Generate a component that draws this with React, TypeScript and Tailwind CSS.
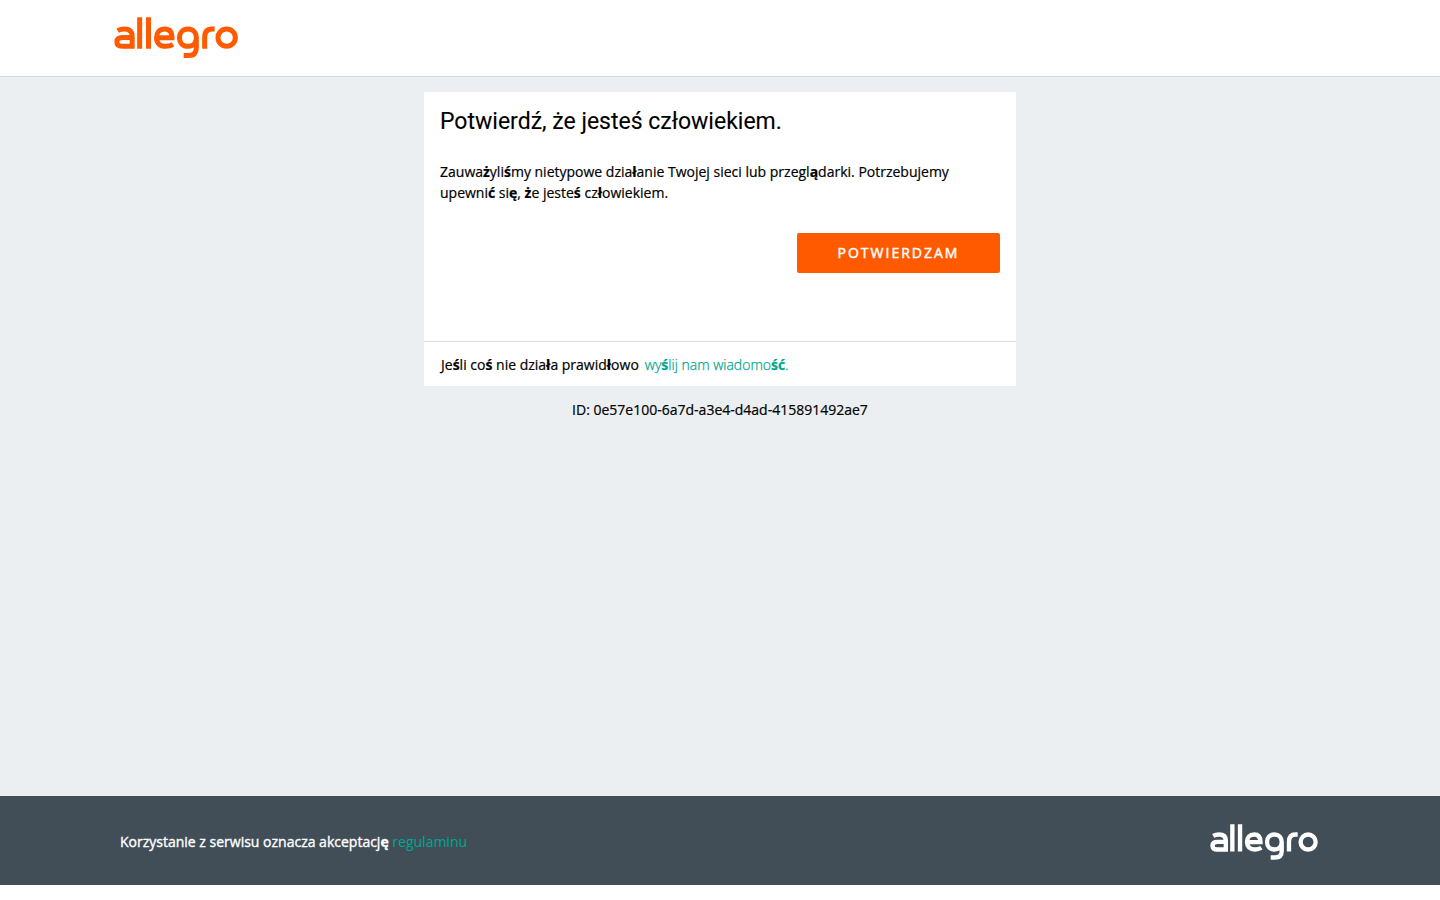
function Logo({ className }: { className: string }) {
  return (
    <svg className={className} viewBox="27 35 372 125" fill="none" stroke="currentColor" strokeWidth="15" role="img" aria-label="allegro">
      <path d="M38 76Q47 71 58 71Q81.500 71 81.500 92V123H52Q35.500 123 35.500 109.500Q35.500 96.500 53 96.500H78" />
      <path d="M104 36V130M130.500 36V130" />
      <path d="M204 117Q195 123 182 123C164 123 154.500 112 154.500 97C154.500 82 164 71 179 71C194 71 201 81 201 97.500H158" />
      <path d="M274 97C274 82 264 71 249 71C234 71 223.500 82 223.500 97C223.500 112 234 123 249 123C264 123 274 112 274 97V128Q274 150.500 251 150.500H236" />
      <path d="M299 130V97Q299 71 321 71H329" />
      <circle cx="365" cy="97" r="26" />
    </svg>
  );
}

function Accented({ children }: { children: string }) {
  return (
    <>
      {children.split(/([żśłąćę]+)/).map((part, i) =>
        i % 2 ? <span key={i} className="font-bold">{part}</span> : part
      )}
    </>
  );
}

export default function App() {
  return (
    <div className="flex h-[900px] flex-col bg-white font-['Open_Sans',sans-serif] text-sm leading-[21px] text-black [-webkit-text-stroke:0.2px]">
      <header className="h-[77px] shrink-0 border-b border-[#d5dade] bg-white pt-[17px] pl-[114px]">
        <Logo className="h-[41.700px] w-[124px] text-[#ff5a00]" />
      </header>
      <main className="flex h-[719px] shrink-0 flex-col items-center bg-[#ebeff2] pt-[15px]">
        <section className="flex h-[294px] w-[592px] flex-col bg-white">
          <div className="flex h-[249px] flex-col px-4 pt-[15px]">
            <h1 className="font-[Roboto,sans-serif] text-[23px] leading-[30px] [-webkit-text-stroke:0.1px]">Potwierdź, że jesteś człowiekiem.</h1>
            <p className="mt-6">
              <Accented>Zauważyliśmy nietypowe działanie Twojej sieci lub przeglądarki. Potrzebujemy</Accented>
              <br />
              <Accented>upewnić się, że jesteś człowiekiem.</Accented>
            </p>
            <button className="mt-[30px] h-10 w-[203px] self-end rounded-[2px] bg-[#ff5a00] pb-[2px] tracking-[2px] text-white [-webkit-text-stroke:0.45px]">POTWIERDZAM</button>
          </div>
          <div className="h-[45px] border-t border-[#dddddd] pt-3 pr-4 pl-[17px]">
            <Accented>Jeśli coś nie działa prawidłowo</Accented>
            <a className="ml-[6px] font-light text-[#00a790] [-webkit-text-stroke:0.25px]"><Accented>wyślij nam wiadomość.</Accented></a>
          </div>
        </section>
        <p className="mt-[13px]">ID: 0e57e100-6a7d-a3e4-d4ad-415891492ae7</p>
      </main>
      <footer className="flex h-[89px] shrink-0 justify-between bg-[#414e58] pr-[122px] pl-[120px] text-white">
        <p className="mt-[35px] [-webkit-text-stroke:0.35px]"><Accented>Korzystanie z serwisu oznacza akceptację</Accented> <a className="text-[#00a790] [-webkit-text-stroke:0px]">regulaminu</a></p>
        <Logo className="mt-[28px] h-[36.300px] w-[108px]" />
      </footer>
    </div>
  );
}
